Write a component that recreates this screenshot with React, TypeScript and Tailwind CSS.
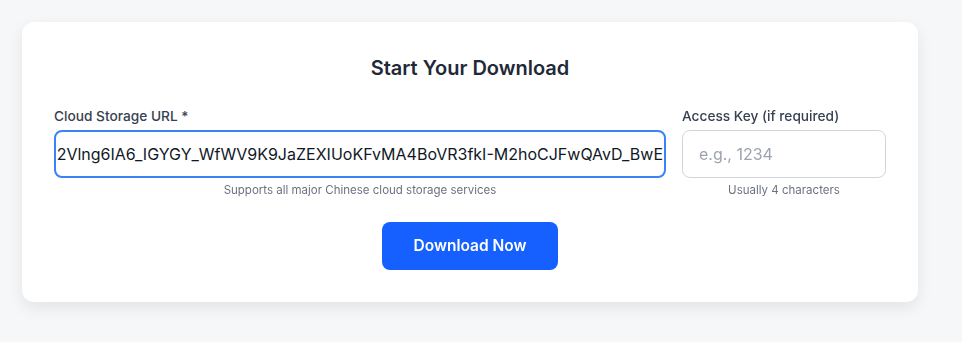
import { useEffect, useRef } from "react";

const kUrl =
  "https://pan.baidu.com/s/1xQ7rTz?gclid=Cj0KCQjw2Vlng6IA6_IGYGY_WfWV9K9JaZEXIUoKFvMA4BoVR3fkI-M2hoCJFwQAvD_BwE";

export default function App() {
  const urlRef = useRef<HTMLInputElement | null>(null);

  // keep the end of the long link in view, like after pasting
  useEffect(() => {
    const el = urlRef.current;
    if (!el) return;
    el.focus();
    el.setSelectionRange(kUrl.length, kUrl.length);
    el.scrollLeft = el.scrollWidth;
  }, []);

  return (
    <main className="min-h-screen bg-[#f6f7f9] px-[22px] pt-[22px] pb-10 font-['Inter',sans-serif] antialiased">
      <section className="w-[896px] rounded-xl bg-white px-8 pt-8 pb-8 shadow-[0_6px_16px_rgba(0,0,0,0.08)]">
        <h2 className="text-center text-[20px] leading-7 font-semibold text-[#1f2937]">Start Your Download</h2>

        <div className="mt-6 flex gap-4">
          <div className="flex-1">
            <label className="block text-[13.7px] leading-5 font-medium text-[#374151]">Cloud Storage URL *</label>
            <input
              ref={urlRef}
              defaultValue={kUrl}
              className="mt-1 block h-12 w-full rounded-lg border-2 border-[#3b82f6] px-px text-[16px] text-[#111827] caret-[#111827] outline-none"
            />
            <p className="mt-1 text-center text-[11.5px] leading-4 text-[#6b7280]">
              Supports all major Chinese cloud storage services
            </p>
          </div>

          <div className="w-[204px]">
            <label className="block text-[13.7px] leading-5 font-medium text-[#374151]">Access Key (if required)</label>
            <input
              placeholder="e.g., 1234"
              className="mt-1 block h-12 w-full rounded-lg border border-[#d1d5db] px-4 text-[16px] text-[#111827] outline-none placeholder:text-[#9ca3af]"
            />
            <p className="mt-1 text-center text-[11.5px] leading-4 text-[#6b7280]">Usually 4 characters</p>
          </div>
        </div>

        <div className="mt-6 flex justify-center">
          <button className="h-12 w-[176px] rounded-lg bg-[#1660ff] text-[15.5px] font-semibold text-white">
            Download Now
          </button>
        </div>
      </section>
    </main>
  );
}
